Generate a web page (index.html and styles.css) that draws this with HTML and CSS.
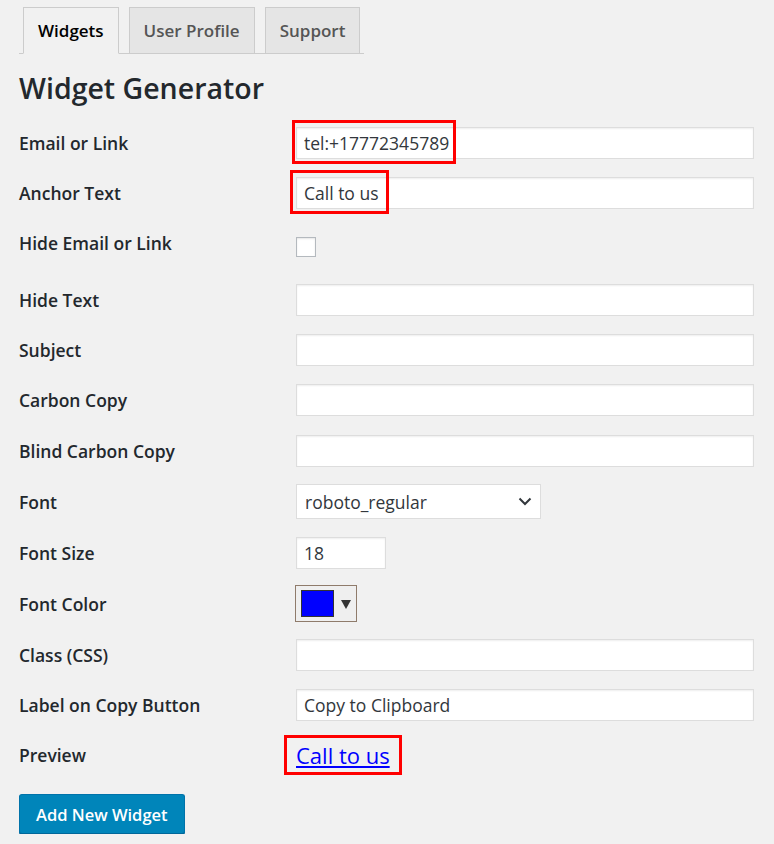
FILE: index.html
```html
<!DOCTYPE html>
<html lang="en">
<head>
    <meta charset="UTF-8">
    <meta name="viewport" content="width=device-width, initial-scale=1.0">
    <title>Widget Generator</title>
    <link rel="stylesheet" href="styles.css">
</head>
<body>
    <div class="wrap">
        <nav class="tabs">
            <a class="tab active" href="#">Widgets</a>
            <a class="tab" href="#">User Profile</a>
            <a class="tab" href="#">Support</a>
        </nav>

        <h1>Widget Generator</h1>

        <form class="form">
            <div class="row">
                <label class="label">Email or Link</label>
                <div class="field">
                    <input class="text" type="text" value="tel:+17772345789">
                    <span class="mark mark-email"></span>
                </div>
            </div>
            <div class="row">
                <label class="label">Anchor Text</label>
                <div class="field">
                    <input class="text" type="text" value="Call to us">
                    <span class="mark mark-anchor"></span>
                </div>
            </div>
            <div class="row row-check">
                <label class="label">Hide Email or Link</label>
                <div class="field">
                    <span class="checkbox"></span>
                </div>
            </div>
            <div class="row">
                <label class="label">Hide Text</label>
                <div class="field"><input class="text" type="text"></div>
            </div>
            <div class="row">
                <label class="label">Subject</label>
                <div class="field"><input class="text" type="text"></div>
            </div>
            <div class="row">
                <label class="label">Carbon Copy</label>
                <div class="field"><input class="text" type="text"></div>
            </div>
            <div class="row row-wide">
                <label class="label">Blind Carbon Copy</label>
                <div class="field"><input class="text" type="text"></div>
            </div>
            <div class="row row-wide">
                <label class="label">Font</label>
                <div class="field">
                    <div class="select">
                        <span>roboto_regular</span>
                        <svg width="14" height="9" viewBox="0 0 14 9"><path d="M1.5 1.5 7 7l5.5-5.5" fill="none" stroke="#32373c" stroke-width="2"/></svg>
                    </div>
                </div>
            </div>
            <div class="row row-wide">
                <label class="label">Font Size</label>
                <div class="field"><input class="text small" type="text" value="18"></div>
            </div>
            <div class="row row-wide">
                <label class="label">Font Color</label>
                <div class="field">
                    <div class="color-btn">
                        <span class="swatch"></span>
                        <svg class="caret" width="10" height="9" viewBox="0 0 10 9"><path d="M0 0h10L5 9z" fill="#333"/></svg>
                    </div>
                </div>
            </div>
            <div class="row row-wide">
                <label class="label">Class (CSS)</label>
                <div class="field"><input class="text" type="text"></div>
            </div>
            <div class="row">
                <label class="label">Label on Copy Button</label>
                <div class="field"><input class="text" type="text" value="Copy to Clipboard"></div>
            </div>
            <div class="row">
                <label class="label">Preview</label>
                <div class="field">
                    <a class="preview" href="#">Call to us</a>
                    <span class="mark mark-preview"></span>
                </div>
            </div>

            <button class="button" type="button">Add New Widget</button>
        </form>
    </div>
</body>
</html>
```

FILE: styles.css
```css
body {
    margin: 0;
    background: #f1f1f1;
    font-family: "Open Sans", Arial, sans-serif;
    color: #23282d;
}
.wrap {
    padding: 7px 20px 0 19px;
}
.tabs {
    display: inline-flex;
    gap: 10px;
    padding: 0 4px;
    border-bottom: 1px solid #ccc;
    height: 46px;
}
.tab {
    box-sizing: border-box;
    height: 47px;
    line-height: 45px;
    padding: 0 14px;
    border: 1px solid #ccc;
    background: #e5e5e5;
    color: #555;
    font-size: 17px;
    font-weight: 600;
    text-decoration: none;
}
.tab.active {
    background: #f1f1f1;
    color: #000;
    border-bottom-color: #f1f1f1;
}
h1 {
    margin: 14px 0 10px;
    font-size: 28.5px;
    line-height: 40px;
    font-weight: 600;
    color: #23282d;
}
.row {
    display: flex;
    align-items: center;
    height: 50px;
}
.row-wide {
    height: 51px;
}
.row-check {
    height: 57px;
}
.label {
    width: 277px;
    flex-shrink: 0;
    font-size: 17.5px;
    font-weight: 600;
}
.row-check .label {
    margin-top: -8px;
}
.field {
    position: relative;
    flex: 1;
    display: flex;
    align-items: center;
}
.text {
    box-sizing: border-box;
    width: 100%;
    height: 32px;
    margin: 0;
    padding: 0 7px;
    border: 1px solid #ddd;
    box-shadow: inset 0 1px 2px rgba(0, 0, 0, .07);
    background: #fff;
    color: #32373c;
    font-family: inherit;
    font-size: 17.5px;
    outline: none;
}
.text.small {
    width: 90px;
}
.checkbox {
    box-sizing: border-box;
    width: 20px;
    height: 20px;
    margin-top: 1px;
    border: 1px solid #b4b9be;
    background: #fff;
    box-shadow: inset 0 1px 2px rgba(0, 0, 0, .1);
}
.select {
    box-sizing: border-box;
    width: 245px;
    height: 35px;
    display: flex;
    align-items: center;
    justify-content: space-between;
    padding: 0 8px 0 8px;
    border: 1px solid #ddd;
    background: #fff;
    color: #32373c;
    font-size: 17.5px;
}
.color-btn {
    box-sizing: border-box;
    width: 62px;
    height: 37px;
    margin-left: -1px;
    display: flex;
    align-items: center;
    gap: 7px;
    padding: 0 5px;
    border: 1px solid #8f7b6b;
    background: #efefef;
}
.swatch {
    box-sizing: border-box;
    width: 33px;
    height: 27px;
    border: 1px solid #333;
    background: #0000ff;
}
.caret {
    margin-top: 2px;
}
.preview {
    color: #0000ff;
    font-size: 22px;
    line-height: 30px;
}
.mark {
    position: absolute;
    border: 3px solid #ff0000;
    box-sizing: border-box;
}
.mark-email {
    left: -4px;
    top: -7px;
    width: 164px;
    height: 44px;
}
.mark-anchor {
    left: -6px;
    top: -7px;
    width: 99px;
    height: 44px;
}
.mark-preview {
    left: -12px;
    top: -5px;
    width: 118px;
    height: 40px;
}
.button {
    margin-top: 14px;
    height: 40px;
    padding: 0 16px;
    border: 1px solid #0073aa;
    border-bottom-color: #006799;
    border-radius: 3px;
    background: #0085ba;
    box-shadow: 0 1px 0 #006799;
    color: #fff;
    font-family: inherit;
    font-size: 16.5px;
    font-weight: 600;
}
```
